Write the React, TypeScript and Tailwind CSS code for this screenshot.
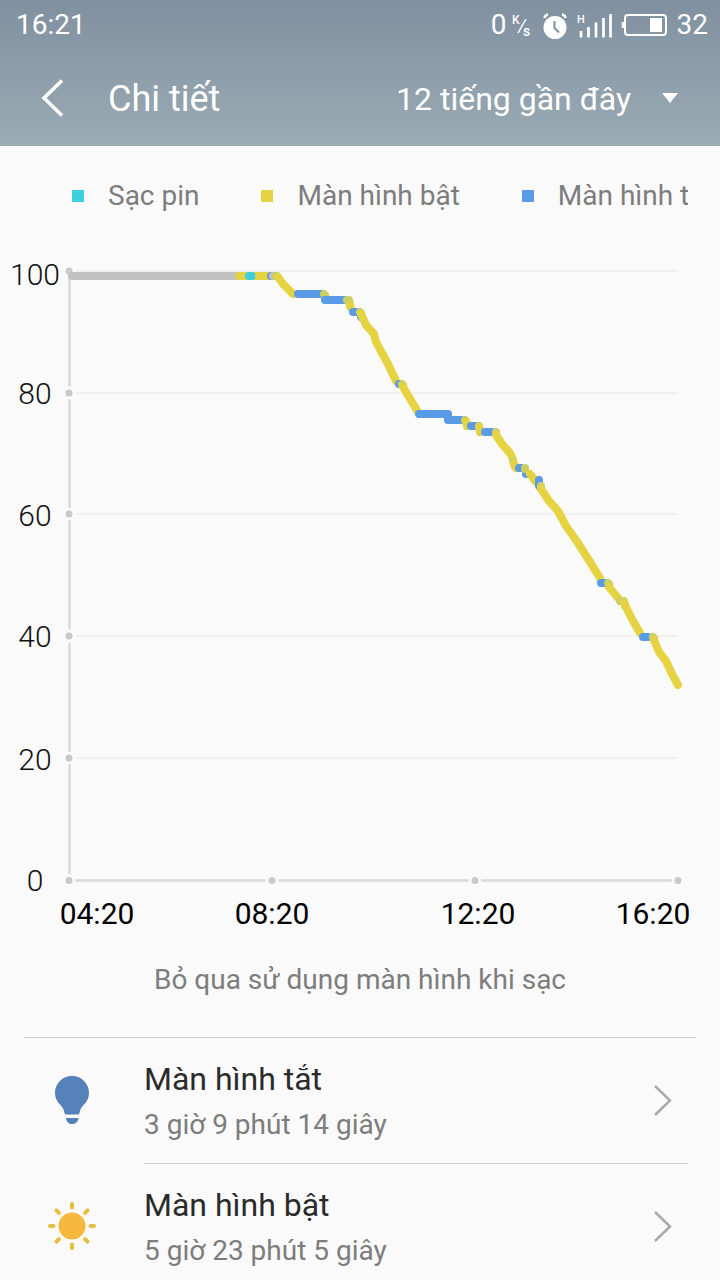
import React from "react";

type Kind = "idle" | "charge" | "on" | "off" | "mix";

const strokes: Record<Kind, string> = {
  idle: "#c1c1c1",
  charge: "#3dcfe0",
  on: "#e6d342",
  off: "#5a9be8",
  mix: "#cccf62",
};

const segments: { kind: Kind; points: string }[] = [
  { kind: "on", points: "239,276 271,276" },
  { kind: "charge", points: "249,276 252,276" },
  { kind: "on", points: "259,276 268,276" },
  { kind: "off", points: "271,276 272,276" },
  { kind: "idle", points: "273,276 274,276" },
  { kind: "mix", points: "276,276 277,276" },
  { kind: "on", points: "278,277 283,284 289,290 293,294" },
  { kind: "off", points: "298,294 322,294" },
  { kind: "mix", points: "324,294 325,295" },
  { kind: "off", points: "325,300 345,300" },
  { kind: "mix", points: "347,300 349,300 350,306" },
  { kind: "on", points: "350,305 351,308" },
  { kind: "off", points: "353,312 357,312" },
  { kind: "off", points: "361,317 362,318" },
  { kind: "mix", points: "360,312 361,313" },
  { kind: "on", points: "361,314 366,325 374,334 376,342 388,364 396,381" },
  { kind: "off", points: "399,384 400,384" },
  { kind: "mix", points: "402,384 403,385" },
  { kind: "on", points: "403,387 418,412" },
  { kind: "off", points: "419,414 448,414 448,420 461,420" },
  { kind: "mix", points: "465,420 466,421" },
  { kind: "on", points: "466,422 467,426" },
  { kind: "off", points: "471,426 475,426" },
  { kind: "mix", points: "479,426 480,432" },
  { kind: "on", points: "479,427 480,431" },
  { kind: "off", points: "485,432 492,432" },
  { kind: "mix", points: "496,432 496,433" },
  { kind: "on", points: "496,435 502,444 510,453 513,460" },
  { kind: "mix", points: "513,461 515,467" },
  { kind: "on", points: "514,464 516,468" },
  { kind: "off", points: "519,468 521,468" },
  { kind: "off", points: "526,474 527,474" },
  { kind: "mix", points: "525,468 525,469" },
  { kind: "on", points: "530,474 536,482" },
  { kind: "off", points: "539,480 539,486" },
  { kind: "mix", points: "541,486 541,487" },
  {
    kind: "on",
    points: "541,489 549,501 558,511 566,526 578,543 590,562 600,578",
  },
  { kind: "off", points: "601,583 605,583" },
  { kind: "mix", points: "608,583 609,584" },
  { kind: "on", points: "609,587 618,598" },
  { kind: "mix", points: "620,601 624,601 625,606" },
  { kind: "on", points: "624,603 632,619 640,633" },
  { kind: "off", points: "643,637 648,637" },
  { kind: "mix", points: "653,637 654,638" },
  { kind: "on", points: "654,640 659,652 666,661 672,674 678,685" },
];

const levels = [
  { label: "100", y: 271, base: 285 },
  { label: "80", y: 393, base: 404 },
  { label: "60", y: 514, base: 526 },
  { label: "40", y: 636, base: 647 },
  { label: "20", y: 758, base: 770 },
];

const times = [
  { label: "04:20", x: 97 },
  { label: "08:20", x: 272 },
  { label: "12:20", x: 478 },
  { label: "16:20", x: 653 },
];

function StatusBar() {
  return (
    <div className="flex h-[50px] items-center justify-between pl-4 pr-3 text-[28px] leading-8">
      <span>16:21</span>
      <div className="flex items-center">
        <span>0</span>
        <svg className="ml-1 h-8 w-5" viewBox="0 0 20 32" role="img" aria-label="K/s">
          <text x="1" y="15" fontSize="12" fontWeight="500" fill="#fff">K</text>
          <path d="M7 24 15 10" stroke="#fff" strokeWidth="1.5" />
          <text x="12" y="27" fontSize="14" fontWeight="500" fill="#fff">s</text>
        </svg>
        <svg className="ml-3 h-8 w-6" viewBox="0 0 24 32" aria-hidden="true">
          <circle cx="12" cy="18.500" r="11.5" fill="#fff" />
          <path d="M1.500 9 Q2 6 5 5.500 M22.500 9 Q22 6 19 5.500" fill="none" stroke="#fff" strokeWidth="2.4" />
          <path d="M11.5 12 V19 L16 23.500" fill="none" stroke="#82919f" strokeWidth="2" />
        </svg>
        <svg className="ml-2.5 h-8 w-9" viewBox="0 0 36 32" aria-hidden="true">
          <text x="0" y="14" fontSize="11" fontWeight="500" fill="#fff">H</text>
          <path
            d="M4 22V28.500 M11.500 18V28.500 M19 13.500V28.500 M26.500 9V28.500 M33.500 5V28.500"
            stroke="#fff"
            strokeWidth="2.700"
          />
        </svg>
        <svg className="ml-2 h-8 w-12" viewBox="0 0 48 32" aria-hidden="true">
          <rect x="4" y="6" width="41" height="20" rx="3" fill="none" stroke="#fff" strokeWidth="2" />
          <path d="M2 13V19" stroke="#fff" strokeWidth="2.500" />
          <rect x="29" y="9" width="12" height="14" fill="#fff" />
        </svg>
        <span className="ml-2">32</span>
      </div>
    </div>
  );
}

function TitleBar() {
  return (
    <div className="flex h-24 items-center pl-7 pr-10 pt-0.5">
      <button type="button" aria-label="Back" className="flex h-12 w-12 items-center justify-center">
        <svg className="h-10 w-10" viewBox="0 0 40 40" fill="none" stroke="#fff" strokeWidth="3.500">
          <path d="M30 1.500 12 19 30 36.500" />
        </svg>
      </button>
      <h1 className="ml-8 text-[36px] leading-12">Chi tiết</h1>
      <div className="relative ml-auto flex items-center">
        <select
          aria-label="Khoảng thời gian"
          className="appearance-none bg-transparent pr-12 text-[32px] leading-12 outline-none"
          defaultValue="12"
        >
          <option value="12">12 tiếng gần đây</option>
        </select>
        <svg className="pointer-events-none absolute right-0 h-5 w-5" viewBox="0 0 20 20" aria-hidden="true">
          <path d="M2 4H18L10 14Z" fill="#fff" />
        </svg>
      </div>
    </div>
  );
}

function Legend() {
  return (
    <ul className="ml-[72px] mr-8 mt-6 flex gap-[62px] overflow-hidden whitespace-nowrap text-[28px] leading-[52px] text-[#7d7d7d]">
      <li className="flex shrink-0 items-center gap-6">
        <span className="h-3 w-3 bg-[#3dcfe0]" />
        Sạc pin
      </li>
      <li className="flex shrink-0 items-center gap-6">
        <span className="h-3 w-3 bg-[#e6d342]" />
        Màn hình bật
      </li>
      <li className="flex shrink-0 items-center gap-6">
        <span className="h-3 w-3 bg-[#5a9be8]" />
        Màn hình tắt
      </li>
    </ul>
  );
}

function BatteryChart() {
  return (
    <svg className="mt-6 w-full" viewBox="0 246 720 700" role="img" aria-label="Pin">
      {levels.map((l) => (
        <g key={l.label}>
          <path d={`M76 ${l.y}H678`} stroke="#ececec" strokeWidth="1.500" />
          <text x="35" y={l.base} textAnchor="middle" fontSize="30" className="font-light" fill="#111">
            {l.label}
          </text>
        </g>
      ))}
      <text x="35" y="891" textAnchor="middle" fontSize="30" className="font-light" fill="#111">0</text>
      <path d="M69.500 271V881" stroke="#d9d9d9" strokeWidth="2.500" />
      <path d="M69 880.500H678" stroke="#d9d9d9" strokeWidth="2.500" />
      {[271, 393, 514, 636, 758].map((y) => (
        <circle key={y} cx="69" cy={y} r="5" fill="#c9c9c9" stroke="#fafafa" strokeWidth="3" />
      ))}
      {[69, 272, 475, 678].map((x) => (
        <circle key={x} cx={x} cy="880.500" r="5" fill="#c9c9c9" stroke="#fafafa" strokeWidth="3" />
      ))}
      <path d="M72 276H236" stroke="#c1c1c1" strokeWidth="8" strokeLinecap="round" />
      {segments.map((s, i) => (
        <polyline
          key={i}
          points={s.points}
          fill="none"
          stroke={strokes[s.kind]}
          strokeWidth="8"
          strokeLinecap="round"
          strokeLinejoin="round"
        />
      ))}
      {times.map((t) => (
        <text key={t.label} x={t.x} y="924" textAnchor="middle" fontSize="30" fill="#000">
          {t.label}
        </text>
      ))}
    </svg>
  );
}

function BulbIcon() {
  return (
    <svg className="h-12 w-12" viewBox="0 0 48 48" fill="#5381b8" aria-hidden="true">
      <path d="M24 0C14.500 0 7 7.500 7 17C7 22 9 25.500 12 28.500C15 31.500 16 34 16.500 37Q17 38.500 18 38.500H30Q31 38.500 31.500 37C32 34 33 31.500 36 28.500C39 25.500 41 22 41 17C41 7.500 33.500 0 24 0Z" />
      <path d="M18 42H30.500C30 46 27 48 24 48S18.500 46 18 42Z" />
    </svg>
  );
}

function SunIcon() {
  return (
    <svg className="h-12 w-12" viewBox="0 0 48 48" aria-hidden="true">
      <circle cx="24" cy="24" r="13.500" fill="#f7b73c" />
      <g stroke="#e8bd3d" strokeWidth="4" strokeLinecap="round">
        {[0, 45, 90, 135, 180, 225, 270, 315].map((a) => (
          <path key={a} d="M24 2V5.500" transform={`rotate(${a} 24 24)`} />
        ))}
      </g>
    </svg>
  );
}

function Row({ icon, title, detail, last }: { icon: React.ReactNode; title: string; detail: string; last?: boolean }) {
  return (
    <li>
      <button type="button" className="flex w-full items-stretch pl-12 pr-8 text-left">
        <span className="flex w-24 shrink-0 items-center pb-0.5">{icon}</span>
        <span className={`flex h-[126px] flex-1 items-center justify-between pb-0.5 pr-4 ${last ? "" : "border-b border-[#d0d0d0]"}`}>
          <span className="flex flex-col gap-0.5">
            <span className="text-[32px] leading-12 text-[#2b2b2b]">{title}</span>
            <span className="text-[28px] leading-10 text-[#7d7d7d]">{detail}</span>
          </span>
          <svg className="h-8 w-5" viewBox="0 0 20 32" fill="none" stroke="#aaa" strokeWidth="2.500" aria-hidden="true">
            <path d="M3 2 18 16.500 3 31" />
          </svg>
        </span>
      </button>
    </li>
  );
}

export default function App() {
  return (
    <div className="flex h-screen flex-col bg-[#fafafa] font-[Roboto,sans-serif]">
      <header className="shrink-0 bg-linear-to-b from-[#8190a0] to-[#9babb4] text-white">
        <StatusBar />
        <TitleBar />
      </header>
      <main className="min-h-0 flex-1 overflow-y-auto [scrollbar-width:none]">
        <Legend />
        <BatteryChart />
        <p className="mt-3.5 text-center text-[28px] leading-10 text-[#7d7d7d]">
          Bỏ qua sử dụng màn hình khi sạc
        </p>
        <hr className="mx-6 mt-[37px] border-[#d0d0d0]" />
        <ul>
          <Row icon={<BulbIcon />} title="Màn hình tắt" detail="3 giờ 9 phút 14 giây" />
          <Row icon={<SunIcon />} title="Màn hình bật" detail="5 giờ 23 phút 5 giây" last />
        </ul>
      </main>
    </div>
  );
}
